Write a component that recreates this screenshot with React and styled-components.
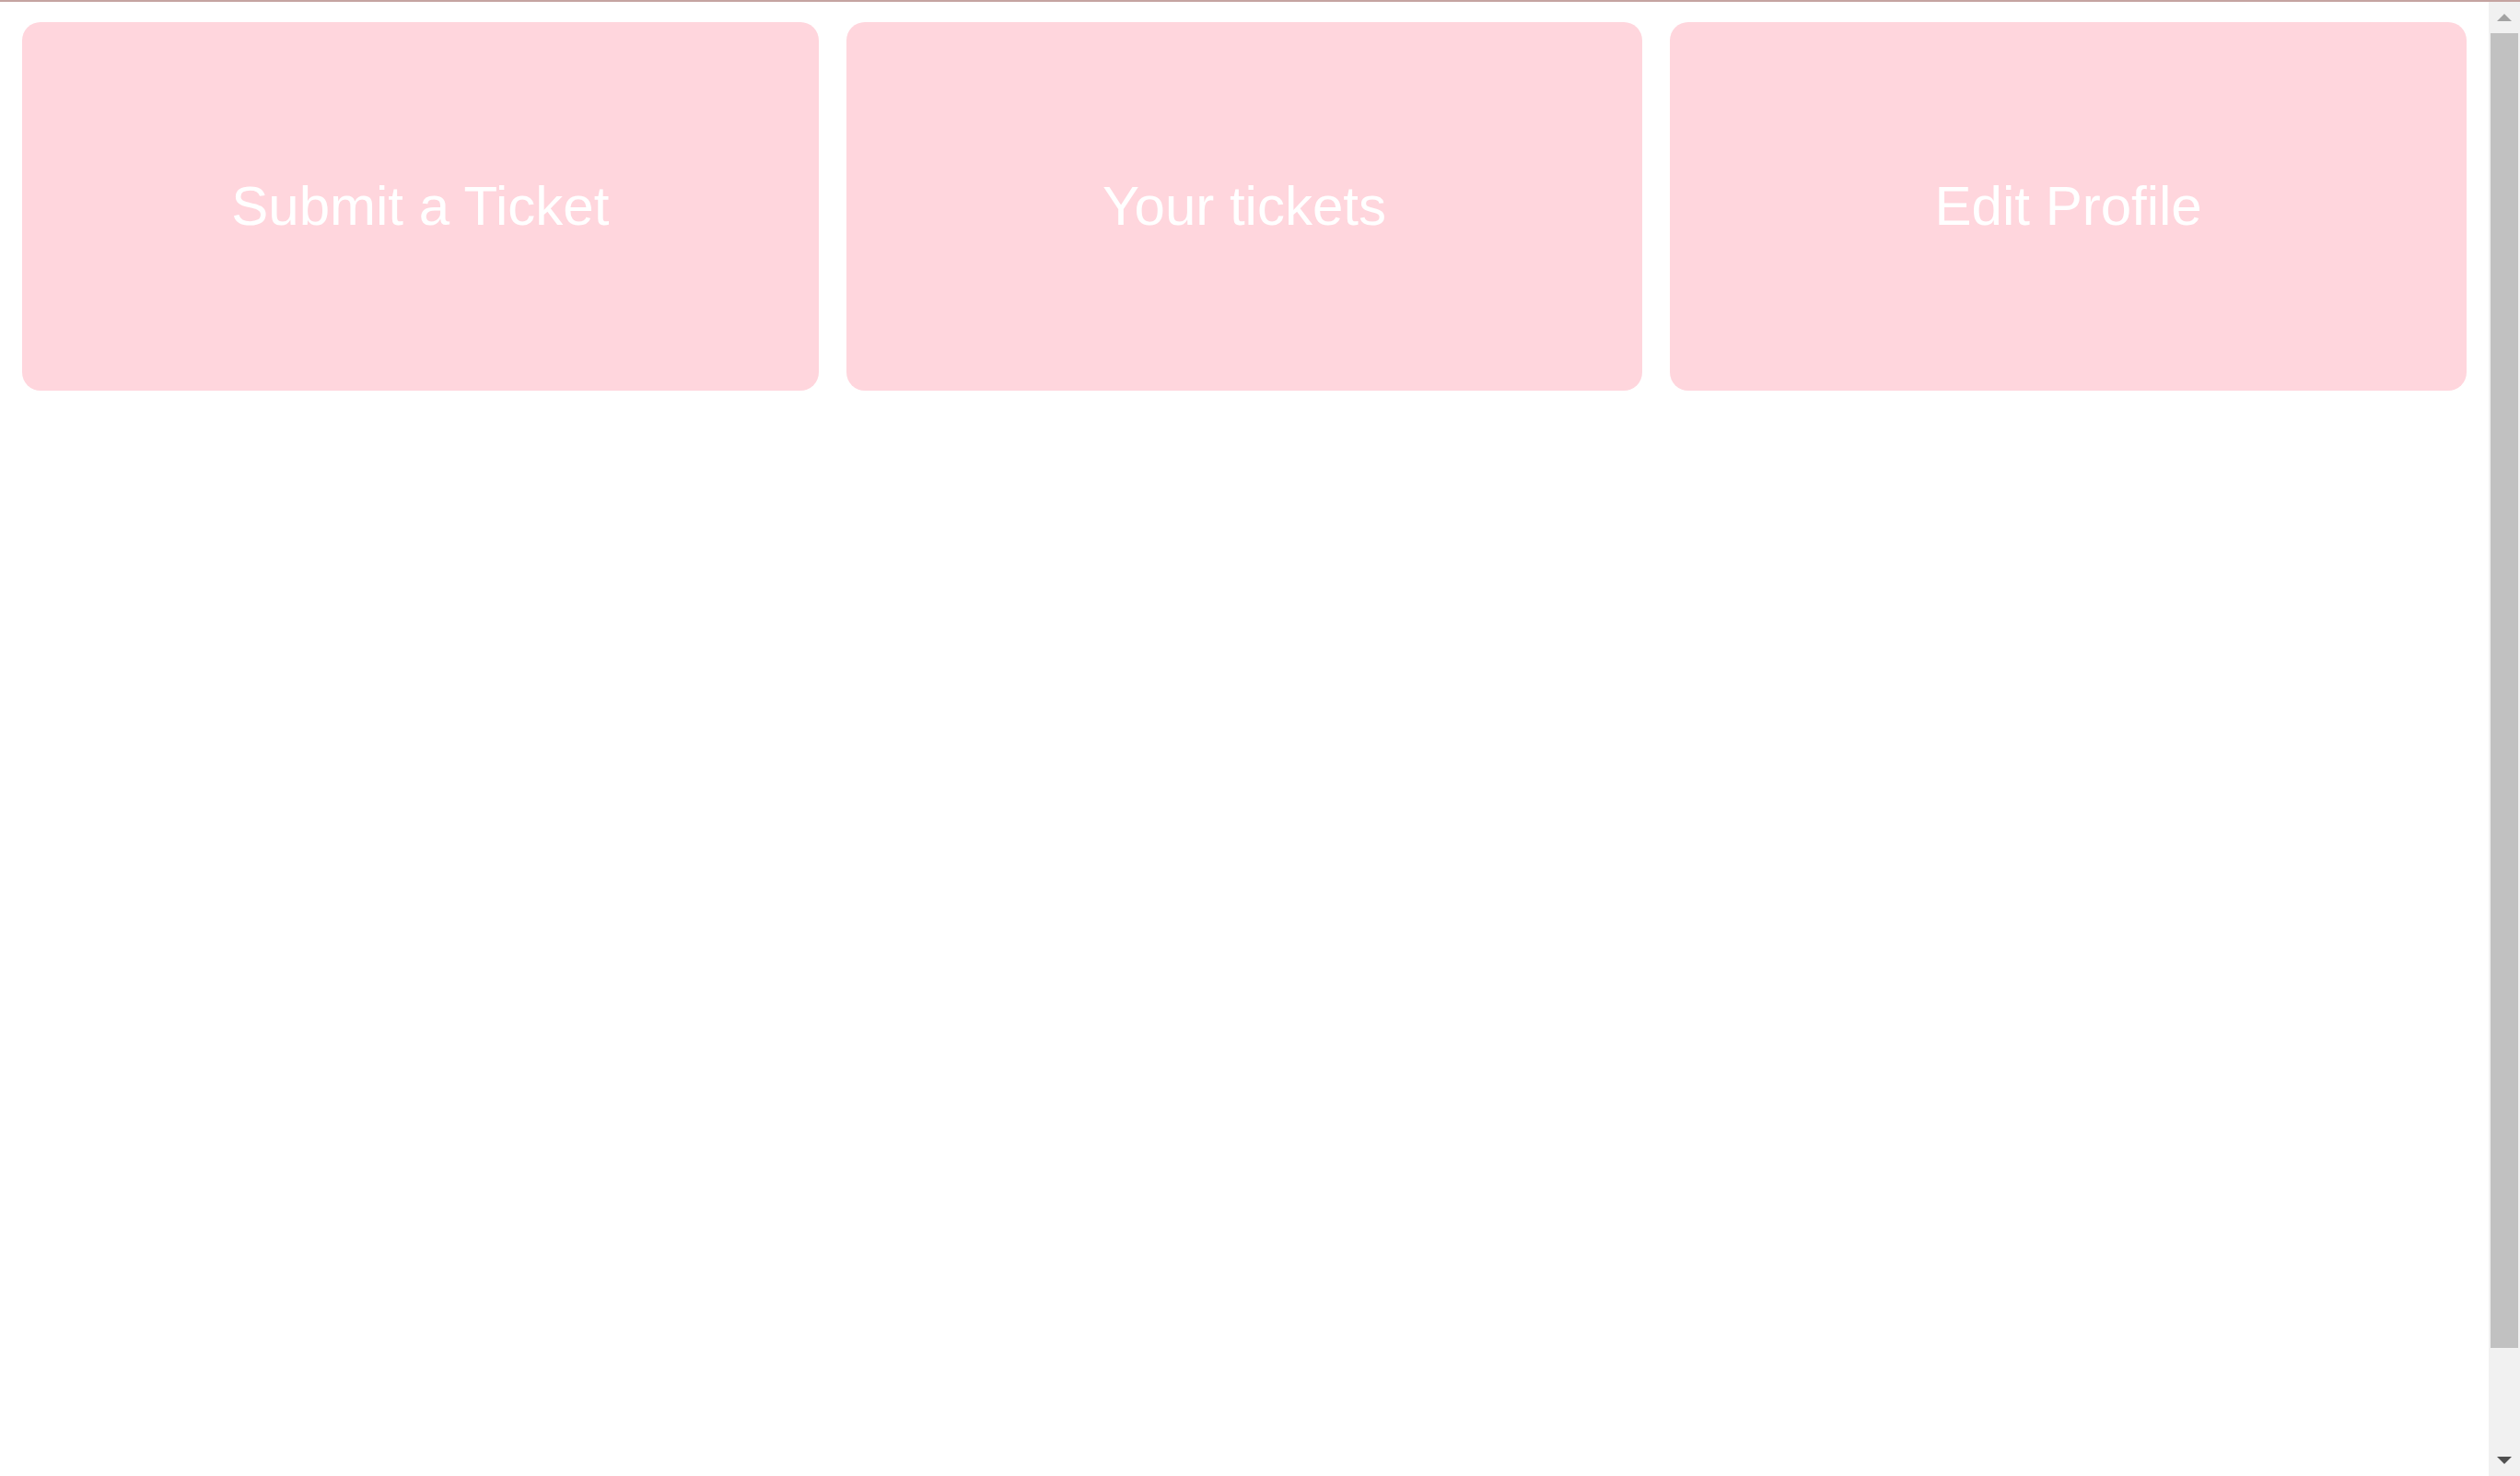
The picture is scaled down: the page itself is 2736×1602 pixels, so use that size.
import React from 'react';
import styled, { createGlobalStyle } from 'styled-components';

const GlobalStyle = createGlobalStyle`
  html, body {
    margin: 0;
    padding: 0;
    overflow: hidden;
    background: #fff;
  }
  body {
    font-family: "Liberation Sans", Arial, sans-serif;
  }
`;

const TopLine = styled.div`
  height: 2px;
  background: #c5a4a1;
`;

const Frame = styled.div`
  display: flex;
  height: calc(100vh - 2px);
`;

const Page = styled.main`
  flex: 1;
  box-sizing: border-box;
  padding: 22px 24px 0;
`;

const Tiles = styled.nav`
  display: grid;
  grid-template-columns: repeat(3, 1fr);
  gap: 30px;
`;

const Tile = styled.a`
  height: 400px;
  border-radius: 20px;
  background: #ffd6dd;
  color: #fff;
  font-size: 60px;
  padding-bottom: 2px;
  box-sizing: border-box;
  display: flex;
  align-items: center;
  justify-content: center;
  text-decoration: none;
  cursor: pointer;
`;

/* window scrollbar, drawn since the headless browser hides it */
const ScrollBar = styled.div`
  width: 34px;
  background: #f1f1f1;
  display: flex;
  flex-direction: column;
`;

const ScrollButton = styled.div`
  height: 34px;
  display: flex;
  align-items: center;
  justify-content: center;
  &::before {
    content: '';
    width: 0;
    height: 0;
    border-left: 8px solid transparent;
    border-right: 8px solid transparent;
    ${({ $down }) =>
      $down
        ? 'border-top: 8px solid #505050;'
        : 'border-bottom: 8px solid #a3a3a3;'}
  }
`;

const Track = styled.div`
  flex: 1;
  padding: 0 2px;
`;

const Thumb = styled.div`
  height: 1427px;
  background: #c1c1c1;
`;

const links = ['Submit a Ticket', 'Your tickets', 'Edit Profile'];

const App = () => {
  return (
    <>
      <GlobalStyle />
      <TopLine />
      <Frame>
        <Page>
          <Tiles>
            {links.map((label) => (
              <Tile key={label}>{label}</Tile>
            ))}
          </Tiles>
        </Page>
        <ScrollBar>
          <ScrollButton />
          <Track>
            <Thumb />
          </Track>
          <ScrollButton $down />
        </ScrollBar>
      </Frame>
    </>
  );
};

export default App;
